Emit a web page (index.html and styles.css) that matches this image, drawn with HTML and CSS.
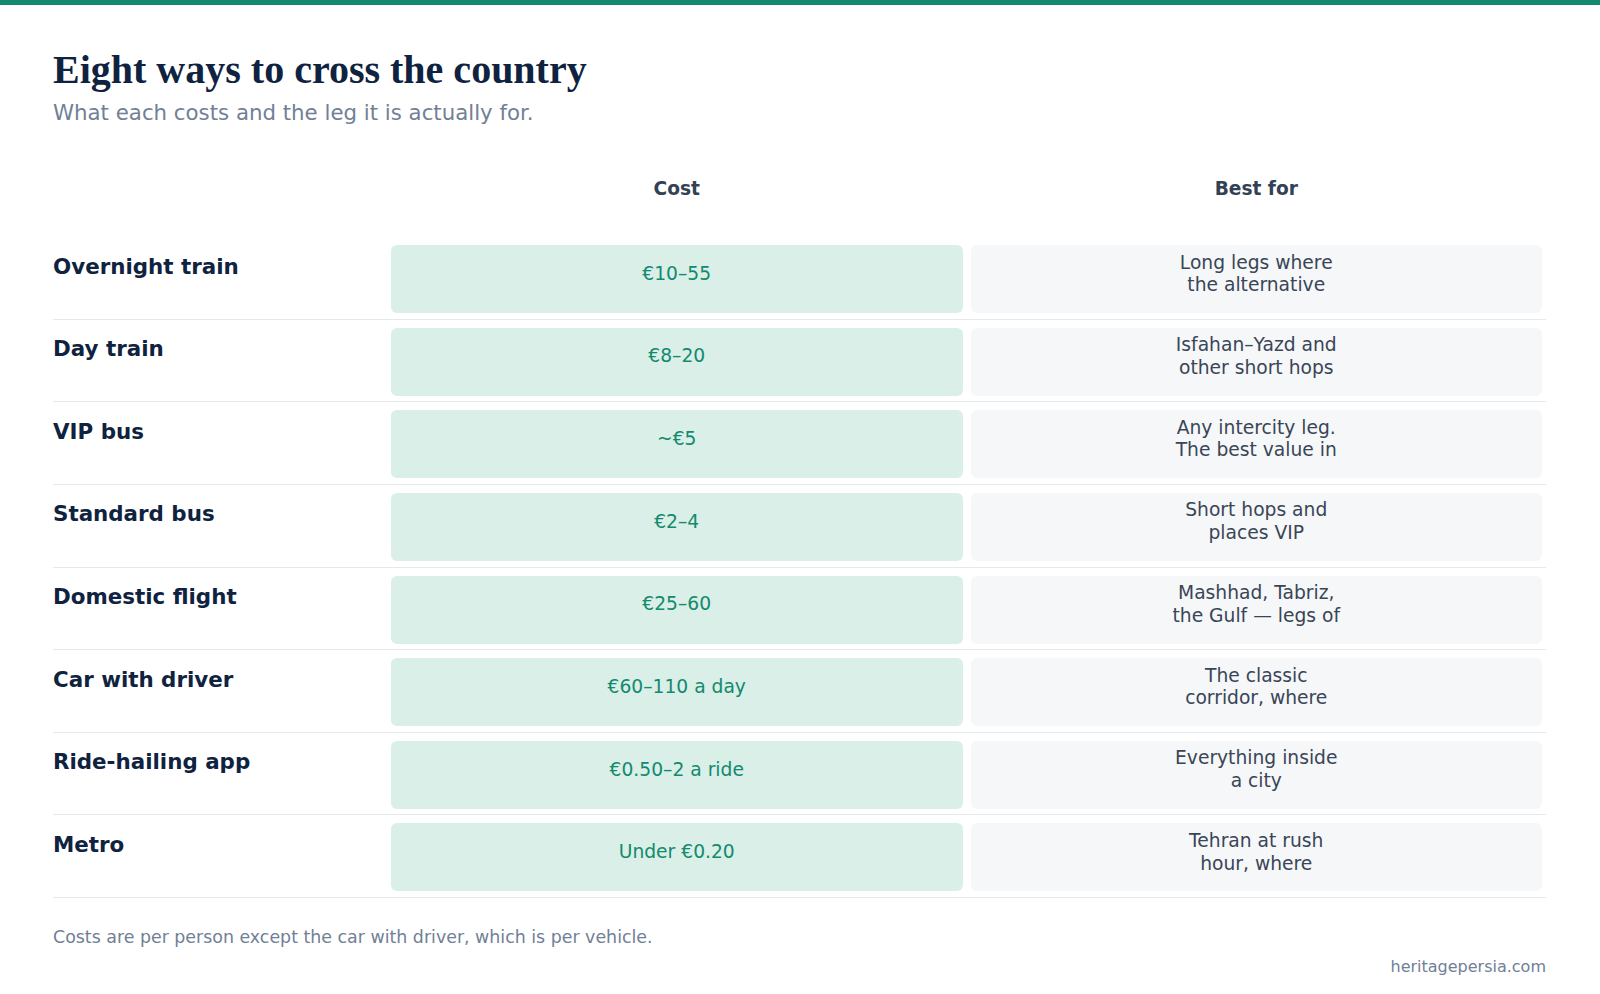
FILE: index.html
```html
<!DOCTYPE html>
<html lang="en">
<head>
<meta charset="utf-8">
<title>Eight ways to cross the country</title>
<link rel="stylesheet" href="styles.css">
</head>
<body>
<div class="topbar"></div>
<main class="page">
  <h1 class="title">Eight ways to cross the country</h1>
  <p class="subtitle">What each costs and the leg it is actually for.</p>

  <div class="table">
    <div class="row head">
      <div class="name"></div>
      <div class="colhead">Cost</div>
      <div class="colhead">Best for</div>
    </div>

    <div class="row">
      <div class="name">Overnight train</div>
      <div class="cell cost"><div class="inner">€10–55</div></div>
      <div class="cell best"><div class="inner"><span class="wrap">Long legs where the alternative</span></div></div>
    </div>
    <div class="row">
      <div class="name">Day train</div>
      <div class="cell cost"><div class="inner">€8–20</div></div>
      <div class="cell best"><div class="inner"><span class="wrap">Isfahan–Yazd and other short hops</span></div></div>
    </div>
    <div class="row">
      <div class="name">VIP bus</div>
      <div class="cell cost"><div class="inner">~€5</div></div>
      <div class="cell best"><div class="inner"><span class="wrap">Any intercity leg. The best value in</span></div></div>
    </div>
    <div class="row">
      <div class="name">Standard bus</div>
      <div class="cell cost"><div class="inner">€2–4</div></div>
      <div class="cell best"><div class="inner"><span class="wrap">Short hops and places VIP</span></div></div>
    </div>
    <div class="row">
      <div class="name">Domestic flight</div>
      <div class="cell cost"><div class="inner">€25–60</div></div>
      <div class="cell best"><div class="inner"><span class="wrap">Mashhad, Tabriz, the Gulf — legs of</span></div></div>
    </div>
    <div class="row">
      <div class="name">Car with driver</div>
      <div class="cell cost"><div class="inner">€60–110 a day</div></div>
      <div class="cell best"><div class="inner"><span class="wrap">The classic corridor, where</span></div></div>
    </div>
    <div class="row">
      <div class="name">Ride-hailing app</div>
      <div class="cell cost"><div class="inner">€0.50–2 a ride</div></div>
      <div class="cell best"><div class="inner"><span class="wrap">Everything inside a city</span></div></div>
    </div>
    <div class="row">
      <div class="name">Metro</div>
      <div class="cell cost"><div class="inner">Under €0.20</div></div>
      <div class="cell best"><div class="inner"><span class="wrap">Tehran at rush hour, where</span></div></div>
    </div>
  </div>

  <p class="note">Costs are per person except the car with driver, which is per vehicle.</p>
  <p class="credit">heritagepersia.com</p>
</main>
</body>
</html>
```

FILE: styles.css
```css
* { box-sizing: border-box; }

html, body {
  margin: 0;
  padding: 0;
  background: #ffffff;
}

body {
  font-family: "DejaVu Sans", "Liberation Sans", sans-serif;
  color: #334155;
}

.topbar {
  height: 5px;
  background: #138a6e;
}

.page {
  padding: 0 54px 0 53px;
}

.title {
  margin: 41px 0 0;
  font-family: "Liberation Serif", "Times New Roman", serif;
  font-weight: 700;
  font-size: 40px;
  line-height: 48px;
  color: #0f2340;
}

.subtitle {
  margin: 4px 0 0;
  font-size: 21.3px;
  line-height: 29px;
  color: #718096;
}

.row {
  display: grid;
  grid-template-columns: 334px 1fr 1fr;
  padding: 8px 0 5.65px;
  border-bottom: 1px solid #e5e8ec;
}

.row.head {
  padding: 50px 0 36px;
  border-bottom: none;
}

.colhead {
  text-align: center;
  font-weight: 700;
  font-size: 18.6px;
  line-height: 24px;
  color: #334155;
}

.name {
  padding-top: 7.5px;
  font-weight: 700;
  font-size: 21.4px;
  line-height: 27px;
  color: #0f2340;
}

.cell {
  margin: 0 4px;
  height: 68px;
  border-radius: 6px;
  padding: 6.5px 12px 0;
  overflow: hidden;
}

.inner {
  min-height: 45px;
  display: flex;
  align-items: center;
  justify-content: center;
  text-align: center;
  font-size: 18.7px;
  line-height: 22.6px;
}

.cost {
  background: #d9efe7;
  color: #138a6e;
}

.best {
  background: #f5f7f9;
  color: #3a4556;
}

.wrap {
  display: block;
  max-width: 170px;
}

.note {
  margin: 27px 0 0;
  font-size: 17.4px;
  line-height: 24px;
  color: #718096;
}

.credit {
  margin: 7px 0 0;
  text-align: right;
  font-size: 16px;
  line-height: 22px;
  color: #718096;
}
```
